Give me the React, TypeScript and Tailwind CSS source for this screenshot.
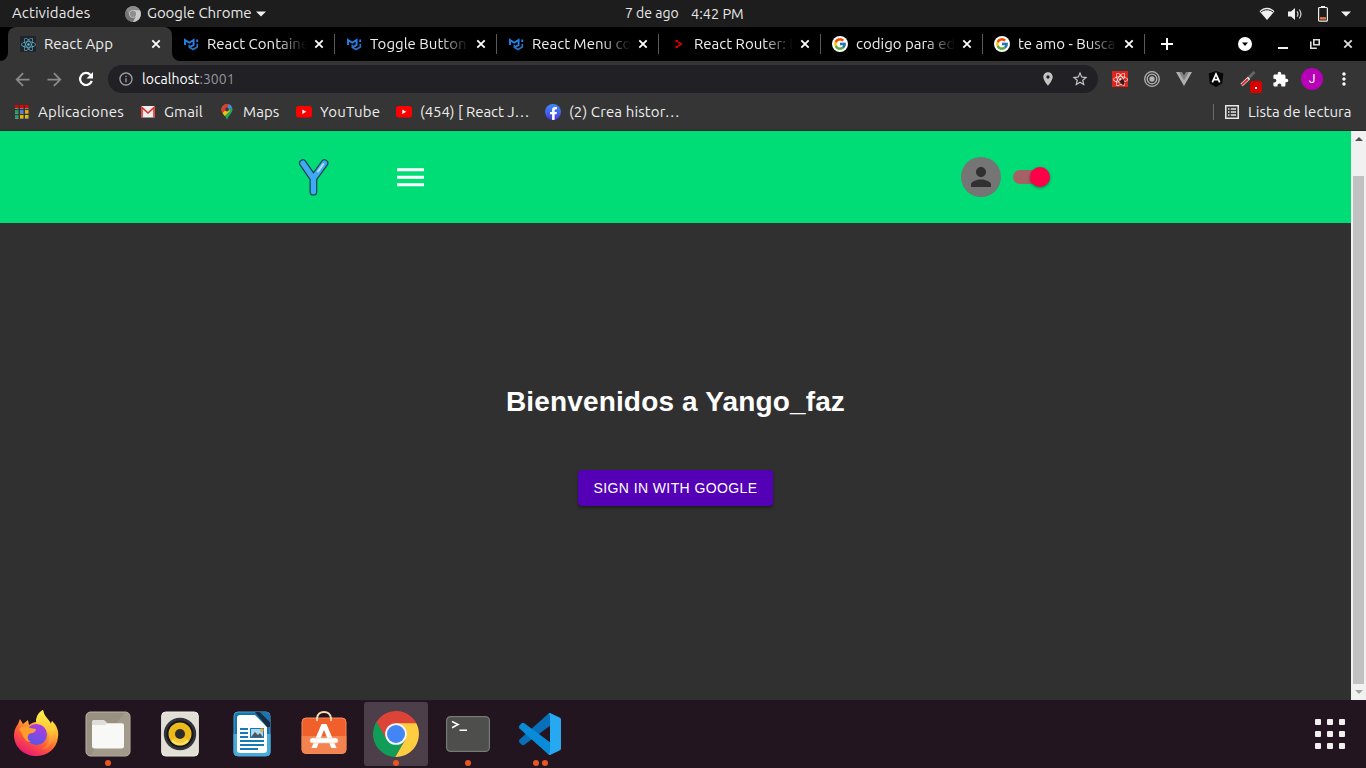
import React from "react";
import { MdPerson, MdArrowBack, MdArrowForward, MdInfoOutline, MdLocationOn, MdStarBorder, MdExtension, MdMoreVert } from "react-icons/md";
import { FaReact, FaFacebookF } from "react-icons/fa";
import { FcGoogle } from "react-icons/fc";

const MuiIcon = () => (
  <svg viewBox="0 0 16 16" className="h-4 w-4" fill="none" strokeWidth="1.9">
    <path d="M2 9V4l4.300 2.700L10.600 4v5L6.500 11.300" stroke="#2583ea" />
    <path d="M6.300 8.800v2.500l3.700 2.200 4.300-2.400V7.800" stroke="#2a6fc4" strokeWidth="1.700" />
    <path d="M14.200 3.500V6" stroke="#2a7fe0" />
  </svg>
);
const GoogleIcon = () => (
  <span className="flex h-4 w-4 items-center justify-center rounded-full bg-white">
    <FcGoogle className="h-[14px] w-[14px]" />
  </span>
);
const ReactTabIcon = () => (
  <span className="flex h-4 w-4 items-center justify-center rounded-[1px] bg-[#20232a]">
    <FaReact className="h-[15px] w-[15px] text-[#61b8d0]" />
  </span>
);
const RouterIcon = () => (
  <svg viewBox="0 0 16 16" className="h-4 w-4" fill="#e60000">
    <path d="M5.500 4h2.400v2.300H5.500zM8 5.800h1.800V7.500H8zM9.500 6.900h2.300v2.300H9.500zM8 8.800h1.800v1.700H8zM5.500 9.800h2.400v2.300H5.500z" />
  </svg>
);
const Cross = ({ className = "" }: { className?: string }) => (
  <svg viewBox="0 0 14 14" className={"h-[14px] w-[14px] shrink-0 " + className} fill="none" stroke="currentColor" strokeWidth="1.8">
    <path d="M3.300 3.300l7.400 7.400M10.700 3.300l-7.400 7.400" />
  </svg>
);

const ChromeShape = ({ mono = false, className = "" }: { mono?: boolean; className?: string }) => {
  const arm = "M19.4-10.3H0L-8.92 5.15-18.6-11.65A22 22 0 0 1 19.4-10.3z";
  const c = mono ? ["#8c8c8c", "#c9c9c9", "#747474", "#8e8e8e", "#d5d5d5"] : ["#db4437", "#ffcd40", "#0f9d58", "#4285f4", "#f4f4f4"];
  return (
    <svg viewBox="-22 -22 44 44" className={className}>
      <circle r="21.500" fill={c[0]} />
      <path d={arm} fill={c[0]} />
      <path d={arm} fill={c[1]} transform="rotate(120)" />
      <path d={arm} fill={c[2]} transform="rotate(240)" />
      <circle r="10.400" fill={c[4]} />
      <circle r="8.600" fill={c[3]} />
    </svg>
  );
};

const tabs = [
  { title: "React Containe", icon: <MuiIcon /> },
  { title: "Toggle Button", icon: <MuiIcon /> },
  { title: "React Menu co", icon: <MuiIcon /> },
  { title: "React Router: D", icon: <RouterIcon /> },
  { title: "codigo para ed", icon: <GoogleIcon /> },
  { title: "te amo - Busca", icon: <GoogleIcon /> },
];

const SystemBar = () => (
  <header className="flex h-[27px] items-center bg-[#1d1d1d] text-[15px] whitespace-nowrap text-[#e8e8e8]">
    <span className="w-[125px] pl-3 tracking-[0.100px]">Actividades</span>
    <ChromeShape mono className="h-4 w-4" />
    <span className="ml-[6px] w-[106px] tracking-[-0.050px]">Google Chrome</span>
    <svg viewBox="0 0 10 6" className="ml-[3px] h-[6px] w-[10px]" fill="#f0f0f0"><path d="M0 .5h10L5 5.500z" /></svg>
    <span className="ml-[359px] w-[56px] text-[14px]">7 de ago</span>
    <span className="ml-[10px] w-[60px] text-[14.500px]">4:42 PM</span>
    <div className="ml-auto flex items-center pr-[15px]">
      <svg viewBox="0 0 16 14" className="h-[14px] w-4" fill="#f0f0f0">
        <path d="M.5 4.300C5-.3 11-.3 15.500 4.300L8 13z" />
        <path d="M1.800 5.100C5.500 2 10.500 2 14.200 5.100" fill="none" stroke="#1d1d1d" strokeWidth="1" />
      </svg>
      <svg viewBox="0 0 16 14" className="ml-3 h-[14px] w-4" fill="#f0f0f0">
        <path d="M1 4.500h3L8 1v12L4 9.500H1z" />
        <path d="M10 4.300q2 2.700 0 5.400M12.300 2.500q3.200 4.500 0 9" fill="none" stroke="#d0d0d0" strokeWidth="1.200" />
      </svg>
      <svg viewBox="0 0 10 16" className="ml-[15px] h-4 w-[10px]">
        <path d="M3 0h4v2H3z" fill="#eee" />
        <rect x=".6" y="1.500" width="8.800" height="13.700" rx="1" fill="none" stroke="#eee" strokeWidth="1.200" />
        <path d="M2 11.200h6v2.300H2z" fill="#f0793a" />
      </svg>
      <svg viewBox="0 0 10 6" className="ml-[13px] h-[6px] w-[10px]" fill="#f0f0f0"><path d="M0 .5h10L5 5.500z" /></svg>
    </div>
  </header>
);

const TabStrip = () => (
  <div className="flex h-[34px] items-center bg-black text-[15px] text-[#eeeeee]">
    <svg viewBox="0 0 8 8" className="h-2 w-2 self-end" fill="#353535"><path d="M8 0v8H0a8 8 0 0 0 8-8z" /></svg>
    <div className="flex h-full w-[164px] items-center rounded-t-lg bg-[#353535] pl-3">
      <ReactTabIcon />
      <span className="ml-2 w-[105px] whitespace-nowrap">React App</span>
      <Cross className="text-white" />
    </div>
    <svg viewBox="0 0 8 8" className="h-2 w-2 self-end" fill="#353535"><path d="M0 0v8h8a8 8 0 0 1-8-8z" /></svg>
    {tabs.map((t, i) => (
      <div key={i} className={"flex h-5 items-center border-r border-[#5a5a5a] " + (i === 0 ? "w-[155px] pl-[3px]" : "w-[162px] pl-[11px]")}>
        {t.icon}
        <span className="ml-2 w-[99px] overflow-hidden whitespace-nowrap [mask-image:linear-gradient(to_right,#000_70%,transparent)]">{t.title}</span>
        <Cross className={(i === 0 ? "ml-[6px]" : "ml-[5px]") + " text-white"} />
      </div>
    ))}
    <svg viewBox="0 0 18 18" className="ml-[13px] h-[18px] w-[18px]" stroke="#fff" strokeWidth="2"><path d="M9 3v12M3 9h12" /></svg>
    <svg viewBox="0 0 14 14" className="ml-[62px] h-[14px] w-[14px]"><circle cx="7" cy="7" r="7" fill="#fff" /><path d="M4 5.500h6L7 9z" fill="#000" /></svg>
    <svg viewBox="0 0 10 10" className="ml-[26px] h-[10px] w-[10px]"><path d="M0 9h10" stroke="#eee" strokeWidth="2" /></svg>
    <svg viewBox="0 0 10 10" className="ml-[22px] h-[10px] w-[10px]" fill="none" stroke="#ddd" strokeWidth="1.600"><path d="M3.800.8h5.400v5H3.800zM.8 2.500v6.700h6" /></svg>
    <Cross className="ml-[21px] text-[#ddd]" />
  </div>
);

const Cell = ({ children }: { children: React.ReactNode }) => (
  <span className="flex h-7 w-8 shrink-0 items-center justify-center">{children}</span>
);

const Toolbar = () => (
  <div className="flex h-9 items-center bg-[#353535] pl-[6px]">
    <Cell><MdArrowBack className="h-[21px] w-[21px] text-[#8b8b8b]" /></Cell>
    <Cell><MdArrowForward className="h-[21px] w-[21px] text-[#8b8b8b]" /></Cell>
    <Cell>
      <svg viewBox="0 0 16 16" className="h-4 w-4" fill="none" stroke="#fff" strokeWidth="2.200">
        <path d="M13.800 9.800A6 6 0 1 1 12.500 3.900" />
        <path d="M15 1v6.500H8.500z" fill="#fff" stroke="none" />
      </svg>
    </Cell>
    <div className="ml-[6px] flex h-7 w-[990px] items-center rounded-full bg-[#202025] pl-[10px] pr-[2px]">
      <MdInfoOutline className="h-4 w-4 text-[#a0a0a4]" />
      <span className="ml-2 text-[14px] tracking-[0.050px] text-white">localhost<span className="text-[#96969a]">:3001</span></span>
      <span className="ml-auto flex">
        <Cell><MdLocationOn className="h-4 w-4 text-[#c4c4c4]" /></Cell>
        <Cell><MdStarBorder className="h-[18px] w-[18px] text-[#c4c4c4]" /></Cell>
      </span>
    </div>
    <div className="ml-[6px] flex">
      <Cell>
        <span className="relative flex h-4 w-4 items-center justify-center bg-[#e2231a]">
          <FaReact className="h-[15px] w-[15px] text-white" />
          <svg viewBox="0 0 10 10" className="absolute right-[2px] bottom-px h-2 w-2"><ellipse cx="5.500" cy="5" rx="2.500" ry="3.200" fill="#3a1512" transform="rotate(-35 5 5)" /><path d="M1 5l8 1M2 8l6-7M5 9l3-1" stroke="#3a1512" strokeWidth=".8" /></svg>
        </span>
      </Cell>
      <Cell><svg viewBox="0 0 16 16" className="h-4 w-4" fill="none" stroke="#b5b5b5" strokeWidth="1.300"><circle cx="8" cy="8" r="7.300" /><circle cx="8" cy="8" r="4.800" /><circle cx="8" cy="8" r="2" fill="#b5b5b5" /></svg></Cell>
      <Cell><svg viewBox="0 0 16 14" className="h-[14px] w-4"><path d="M0 0h5.500L8 4.500 10.500 0H16L8 14z" fill="#b0b0b0" /><path d="M3 0h3L8 3.600 10 0h3L8 8.800z" fill="#828282" /></svg></Cell>
      <Cell><svg viewBox="0 0 16 16" className="h-4 w-4"><path d="M8 0l7.300 2.600-1.100 9.800L8 16l-6.200-3.600L.7 2.600z" fill="#050505" /><path d="M4.300 11.300L8 3l3.700 8.300M5.800 8.700h4.400" fill="none" stroke="#fff" strokeWidth="1.700" /></svg></Cell>
      <Cell>
        <span className="relative h-4 w-4">
          <svg viewBox="0 0 16 16" className="h-4 w-4"><path d="M8 7.500L14.500 1" stroke="#666" strokeWidth="3" /><path d="M1.500 14l7.500-7" stroke="#eee" strokeWidth="3.200" /><path d="M1.500 14l6.500-6" stroke="#df2528" strokeWidth="1.800" /></svg>
          <span className="absolute top-[10px] left-[10px] flex h-3 w-3 items-center justify-center rounded-[2px] bg-[#d90000]"><span className="mt-[2px] h-[2px] w-[2px] bg-white" /></span>
        </span>
      </Cell>
      <Cell><MdExtension className="h-[17px] w-[17px] text-white" /></Cell>
      <Cell><span className="flex h-[22px] w-[22px] items-center justify-center rounded-full bg-[#b800b8] font-[Roboto] text-[12px] text-white">J</span></Cell>
      <Cell><MdMoreVert className="h-5 w-5 text-white" /></Cell>
    </div>
  </div>
);

const YouTubeIcon = () => (
  <svg viewBox="0 0 16 12" className="h-3 w-4"><rect width="16" height="11.500" rx="2.500" fill="#f00" /><path d="M6.300 3.500v4.600l4-2.300z" fill="#fff" /></svg>
);

const bookmarks = [
  {
    label: "Aplicaciones", box: "w-[126px]", gap: "w-6", track: "tracking-[0.200px]",
    icon: (
      <svg viewBox="0 0 14 14" className="ml-px h-[14px] w-[14px]">
        {["#e60000", "#e60000", "#e60000", "#1aa260", "#4c7df0", "#e8a800", "#1aa260", "#e8b800", "#e8b800"].map((f, i) => (
          <g key={i}>
            <rect x={(i % 3) * 5} y={Math.floor(i / 3) * 5} width="3.500" height="3" fill={f} />
            <rect x={(i % 3) * 5} y={Math.floor(i / 3) * 5 + 3} width="3.500" height="1" fill="#aaa" opacity=".7" />
          </g>
        ))}
      </svg>
    ),
  },
  {
    label: "Gmail", box: "w-[80px]", gap: "w-6", track: "tracking-[0.150px]",
    icon: <svg viewBox="0 0 16 12" className="h-3 w-4"><rect x="1" width="14" height="11.500" rx="1" fill="#eee" /><path d="M2 11.500V1.500L8 7l6-5.500v10" fill="none" stroke="#e02a22" strokeWidth="1.600" /></svg>,
  },
  {
    label: "Maps", box: "w-[76px]", gap: "w-[23px]", track: "tracking-[0.100px]",
    icon: (
      <svg viewBox="0 0 14 16" className="h-4 w-[14px]">
        <path d="M7 0a5.500 5.500 0 0 1 5.500 5.500C12.500 9 8.500 11 7 16 5.500 11 1.500 9 1.500 5.500A5.500 5.500 0 0 1 7 0z" fill="#22a75a" />
        <path d="M7 5.500L2.800 2A5.500 5.500 0 0 1 8.700.3z" fill="#e53a30" />
        <path d="M7 5.500L8.700.3a5.500 5.500 0 0 1 3 2.400L7 8z" fill="#4a86f4" />
        <path d="M7 5.500L2.500 9A5.500 5.500 0 0 1 2.800 2z" fill="#e53a30" />
        <path d="M2.500 9L8 4l2 3-5.500 5z" fill="#f7bd08" /><circle cx="7" cy="5.500" r="1.900" fill="#383850" />
      </svg>
    ),
  },
  { label: "YouTube", box: "w-[100px]", gap: "w-6", track: "tracking-[0.180px]", icon: <YouTubeIcon /> },
  { label: "(454) [ React J…", box: "w-[149px]", gap: "w-6", track: "tracking-[-0.060px]", icon: <YouTubeIcon /> },
  {
    label: "(2) Crea histor…", box: "w-[140px]", gap: "w-6", track: "tracking-[0.120px]",
    icon: <span className="flex h-4 w-4 items-end justify-center overflow-hidden rounded-full bg-linear-to-b from-[#3f8bfa] to-[#4338e0]"><FaFacebookF className="h-[13px] w-[13px] text-white" /></span>,
  },
];

const Bookmarks = () => (
  <nav className="flex h-[34px] items-center border-b border-[#292929] bg-[#353535] pb-[3px] pl-[14px] text-[15px] text-[#eeeeee]">
    {bookmarks.map((b) => (
      <div key={b.label} className={"flex shrink-0 items-center whitespace-nowrap " + b.box}>
        <span className={"shrink-0 " + b.gap}>{b.icon}</span>
        <span className={b.track}>{b.label}</span>
      </div>
    ))}
    <div className="ml-auto flex items-center">
      <span className="h-4 w-px bg-[#6a6a6a]" />
      <svg viewBox="0 0 14 14" className="ml-[11px] h-[14px] w-[14px]" fill="none" stroke="#e6e6e6" strokeWidth="1.600"><path d="M.75.75h12.500v12.500H.75zM3 4h1.500M3 7h1.500M3 10h1.500M5.800 4H11M5.800 7H11M5.800 10H11" /></svg>
      <span className="ml-[9px] w-[118px] tracking-[0.080px] whitespace-nowrap">Lista de lectura</span>
    </div>
  </nav>
);

const Page = () => (
  <div className="flex h-[569px]">
    <main className="flex w-[1351px] flex-col bg-[#303030] font-['Liberation_Sans',Arial,sans-serif]">
      <div className="flex h-[92px] items-center bg-[#00dc76] pl-[298px]">
        <svg viewBox="0 0 32 38" className="h-[38px] w-8" fill="none" strokeLinecap="round" strokeLinejoin="round">
          <path d="M4.900 5.200L15.400 20.500 26.500 5.200M15.400 20.500V33.700" stroke="#17404f" strokeWidth="7.800" />
          <path d="M4.900 5.200L15.400 20.500 26.500 5.200M15.400 20.500V33.700" stroke="#3fa9f5" strokeWidth="5.400" />
          <path d="M25.300 6L20 13.500" stroke="#b9e2ff" strokeWidth="2" />
        </svg>
        <svg viewBox="0 0 27 19" className="ml-[67px] h-[19px] w-[27px]" fill="#fff">
          <path d="M0 .3h27v3H0zM0 7.800h27v3H0zM0 15.300h27v3H0z" />
        </svg>
        <div className="ml-[537px] flex h-10 w-10 items-center justify-center rounded-full bg-[#757575]">
          <MdPerson className="h-[30px] w-[30px] text-[#303030]" />
        </div>
        <div className="ml-3 flex h-[14px] w-[34px] items-center rounded-full bg-[#a46264] pl-[17px]">
          <span className="h-5 w-5 shrink-0 rounded-full bg-[#ff0048] shadow-[0_1px_3px_rgba(0,0,0,0.4)]" />
        </div>
      </div>
      <div className="flex flex-col items-center pt-[160px]">
        <h1 className="text-[28px] leading-[38px] font-bold tracking-[0.150px] text-white">Bienvenidos a Yango_faz</h1>
        <button className="mt-[49px] h-9 w-[195px] rounded bg-[#5300b7] text-[14px] tracking-[0.400px] text-white shadow-[0_2px_3px_rgba(0,0,0,0.4)]">SIGN IN WITH GOOGLE</button>
      </div>
    </main>
    <div className="flex w-[15px] flex-col items-center bg-[#f1f1f1]">
      <svg viewBox="0 0 8 4" className="mt-[6px] h-1 w-2" fill="#505050"><path d="M0 4h8L4 0z" /></svg>
      <div className="mt-[35px] h-[508px] w-[11px] bg-[#c1c1c1]" />
      <svg viewBox="0 0 8 4" className="mt-[6px] h-1 w-2" fill="#a3a3a3"><path d="M0 0h8L4 4z" /></svg>
    </div>
  </div>
);

const Firefox = () => (
  <svg viewBox="0 0 46 48" className="mb-[2px] h-12 w-[46px]">
    <defs>
      <linearGradient id="ff1" x1=".8" y1="0" x2=".25" y2="1"><stop offset="0" stopColor="#fff14a" /><stop offset=".35" stopColor="#ffb32e" /><stop offset=".65" stopColor="#ff5a35" /><stop offset="1" stopColor="#e8127c" /></linearGradient>
      <linearGradient id="ff2" x1=".6" y1="0" x2=".4" y2="1"><stop offset="0" stopColor="#b03be0" /><stop offset="1" stopColor="#5a56e6" /></linearGradient>
      <linearGradient id="ff3" x1=".5" y1="0" x2=".5" y2="1"><stop offset="0" stopColor="#fff04a" /><stop offset=".5" stopColor="#ffc936" /><stop offset="1" stopColor="#ff6a3a" /></linearGradient>
    </defs>
    <path d="M5 15l2-5 3 5 5-4 1 5c3-2 5-3 7-3 0-6 3-10 7-12 1 7 6 9 8 14l1-3c5 4 7 11 6 16-1 12-11 19-22 19S1 39 1 26c0-5 2-8 4-11z" fill="url(#ff1)" />
    <path d="M23 14c0-6 3-11 7-13 1 7 6 9 8 14l1-3c4 6 5 13 2 19-3 7-8 9-13 10 8-5 10-12 6-19-2-4-8-5-11-8z" fill="url(#ff3)" />
    <circle cx="23.500" cy="25.500" r="10.500" fill="url(#ff2)" />
    <path d="M6 20c4-4 8-3 11-1l6 1c0 4-5 4-7 5-2 3-2 6 2 8-7 0-7-6-12-13z" fill="#ff9d2c" />
  </svg>
);

const Dock = () => {
  const items = [
    { icon: <Firefox />, dots: 0 },
    {
      dots: 1,
      icon: (
        <svg viewBox="0 0 46 46" className="h-[46px] w-[46px]">
          <rect x="1" y="1" width="44" height="44" rx="4.500" fill="#989080" stroke="#bdb5a5" />
          <path d="M40 1.500H42a3 3 0 0 1 2.500 3v37a3 3 0 0 1-3 3H5z" fill="#a8a191" opacity=".6" />
          <path d="M7 11.500q0-2.500 2.500-2.500h8q2 0 3 1.500l1.500 1.800H37q2 0 2 2V35q0 2.500-2.500 2.500h-27Q7 37.500 7 35z" fill="#f8f8f7" />
          <path d="M7 14V11.500Q7 9 9.500 9h8q2 0 3 1.500l1.500 1.800-2 1.700z" fill="#deddd8" />
        </svg>
      ),
    },
    {
      dots: 0,
      icon: (
        <svg viewBox="0 0 38 46" className="h-[46px] w-[38px]">
          <rect x=".7" y="1" width="36.600" height="44" rx="4" fill="#e2dfd4" stroke="#f1efe9" />
          <circle cx="19" cy="23" r="16.200" fill="#33333b" /><circle cx="19" cy="23" r="13.500" fill="#111820" />
          <circle cx="19" cy="23" r="11.500" fill="#eebb18" /><path d="M19 23L10 30a11.500 11.500 0 0 0 18 0z" fill="#ffe05d" /><circle cx="19" cy="23" r="9" fill="#eab91c" opacity=".6" /><circle cx="19" cy="23" r="5" fill="#2d2d2d" />
        </svg>
      ),
    },
    {
      dots: 0,
      icon: (
        <svg viewBox="0 0 38 46" className="h-[46px] w-[38px]">
          <rect x="1" y="1" width="36" height="44" rx="4" fill="#1375ac" stroke="#4aa7d5" />
          <path d="M.5 23h37v18a4 4 0 0 1-4 4h-29a4 4 0 0 1-4-4z" fill="#46abda" />
          <path d="M4 7q0-3 3-3h15l12 12v23q0 3-3 3H7q-3 0-3-3z" fill="#fff" />
          <path d="M22 1h5l10 10v5h-3z" fill="#172c43" /><path d="M27 1h6a4 4 0 0 1 4 4v6z" fill="#1d74ad" />
          <path d="M7 18h8M7 22h8M7 26h8M7 30h24M7 34h24M7 38h18" stroke="#1479b5" strokeWidth="2" />
          <rect x="17.500" y="17.500" width="13" height="9" fill="#a7d8f2" stroke="#1479b5" /><path d="M18 26l4-5 3 3 2-2 3 4z" fill="#555" /><circle cx="29" cy="19" r="1.800" fill="#f3a823" />
        </svg>
      ),
    },
    {
      dots: 0,
      icon: (
        <svg viewBox="0 0 46 46" className="mb-[3px] h-[46px] w-[46px]">
          <rect x="1" y="8" width="44" height="35.500" rx="4" fill="#f1602b" stroke="#f78b60" /><path d="M.7 26h44.600v13.500a4 4 0 0 1-4 4H4.700a4 4 0 0 1-4-4z" fill="#f48352" />
          <path d="M16 11V8q1-6 7-6t7 6v3" fill="none" stroke="#f8dfb0" strokeWidth="1.800" />
          <path d="M20.500 14h5l10 24h-5.200l-7.300-18-7.300 18H10.500z" fill="#fff" /><rect x="9" y="28" width="28" height="5" rx="2.500" fill="#fff" stroke="#f0c3ad" strokeWidth=".6" />
        </svg>
      ),
    },
    { icon: <ChromeShape className="mb-px h-[46px] w-[46px]" />, dots: 1, active: true },
    {
      dots: 1,
      icon: (
        <svg viewBox="0 0 44 36" className="h-9 w-11">
          <rect x=".6" y=".6" width="42.800" height="34.800" rx="4" fill="#4e4e4c" stroke="#767a76" strokeWidth="1.200" />
          <path d="M6 5.500l6 3-6 3.200M13.500 14.300H21" fill="none" stroke="#fff" strokeWidth="1.600" />
        </svg>
      ),
    },
    {
      dots: 2,
      icon: (
        <svg viewBox="0 0 42 42" className="h-[42px] w-[42px]">
          <path d="M.5 26.500L29 1l3-.5v11.500L5 32q-1 .7-2 0L.5 29.500q-1-1.500 0-3z" fill="#0870b8" />
          <path d="M.5 12.500L3 10q1-.7 2 0l27 20v11.500L29 41 .5 15.500q-1-1.500 0-3z" fill="#0a8bd8" />
          <path d="M31 0l10 4.800q1 .6 1 1.700v29q0 1.200-1 1.700L31 42q-1 0-2-1 2 0 2-2V3q0-2-2-2z" fill="#27a9f2" />
        </svg>
      ),
    },
  ];
  return (
    <footer className="flex h-[68px] items-center bg-[#231520]">
      {items.map((it, i) => (
        <div key={i} className="flex h-full w-[72px] items-center justify-center">
          <div className={"relative flex h-16 w-16 items-center justify-center rounded-[3px] " + (it.active ? "bg-[#4c3f4a]" : "")}>
            {it.icon}
            <span className="absolute inset-x-0 bottom-0 flex justify-center gap-[3px]">
              {Array.from({ length: it.dots }, (_, d) => <span key={d} className="h-[6px] w-[6px] rounded-full bg-[#e95420]" />)}
            </span>
          </div>
        </div>
      ))}
      <div className="mr-[21px] ml-auto grid grid-cols-3 gap-[6px]">
        {Array.from({ length: 9 }, (_, d) => <span key={d} className="h-[6px] w-[6px] rounded-[1px] bg-[#f2f0ee]" />)}
      </div>
    </footer>
  );
};

export default function App() {
  return (
    <div className="h-[768px] w-[1366px] overflow-hidden bg-[#303030] font-[Ubuntu,'Noto_Sans',sans-serif]">
      <SystemBar />
      <TabStrip />
      <Toolbar />
      <Bookmarks />
      <Page />
      <Dock />
    </div>
  );
}
